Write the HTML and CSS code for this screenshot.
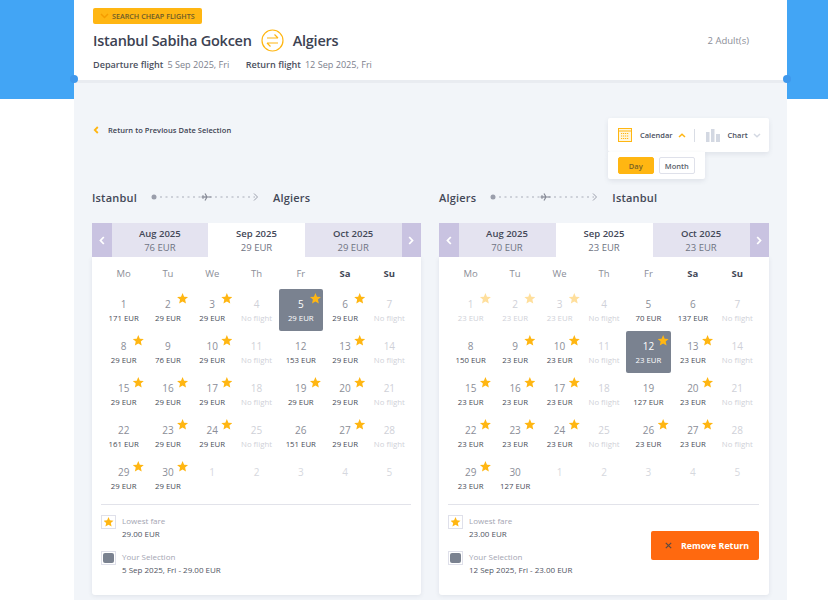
FILE: index.html
```html
<!DOCTYPE html>
<html lang="en">
<head>
    <meta charset="UTF-8">
    <title>Flight calendar</title>
    <link rel="stylesheet" href="styles.css">
</head>
<body>
    <div class="page">
        <div class="header">
            <div class="badge"><svg class="badge-chev" width="9" height="6" viewBox="0 0 9 6"><path d="M1 1l3.500 3.500L8 1" fill="none" stroke="#f59c00" stroke-width="1.500"/></svg>SEARCH CHEAP FLIGHTS</div>
            <div class="title-row">
                <div class="title-main">
                    <span>Istanbul Sabiha Gokcen</span>
                    <svg class="swap" width="23" height="23" viewBox="0 0 23 23"><circle cx="11.500" cy="11.500" r="10.500" fill="none" stroke="#ffb612" stroke-width="1.200"/><path d="M6 9h11M13.500 5.500L17 9M17 14H6M9.500 17.500L6 14" fill="none" stroke="#ffb612" stroke-width="1.200"/></svg>
                    <span>Algiers</span>
                </div>
                <div class="pax">2 Adult(s)</div>
            </div>
            <div class="dates">
                <b>Departure flight</b><span>5 Sep 2025, Fri</span>
                <b class="return">Return flight</b><span>12 Sep 2025, Fri</span>
            </div>
        </div>

        <div class="panel">
            <div class="toolbar">
                <a class="back"><svg width="6" height="8" viewBox="0 0 6 8"><path d="M4.800 1L1.800 4l3 3" fill="none" stroke="#ffb612" stroke-width="1.800"/></svg>Return to Previous Date Selection</a>
                <div class="switch">
                    <div class="switch-top">
                        <svg width="14" height="14" viewBox="0 0 14 14"><rect x=".5" y=".5" width="13" height="13" fill="#fff6dc" stroke="#ffb612"/><path d="M0 3h14" stroke="#ffb612"/><path d="M3 5.500h8M3 8h8M3 10.500h8" stroke="#ffb612" stroke-width="1.200" stroke-dasharray="1.200 .8"/></svg>
                        <span class="sw-label">Calendar</span>
                        <svg class="sw-chev" width="8" height="5" viewBox="0 0 8 5"><path d="M1 4l3-2.800L7 4" fill="none" stroke="#ffb612" stroke-width="1.500"/></svg>
                        <i class="sw-sep"></i>
                        <svg width="14" height="13" viewBox="0 0 14 13"><path d="M0 3h3.500v10H0zM5 0h3.500v13H5zM10 5h4v8h-4z" fill="#d3d8e2"/></svg>
                        <span class="sw-label">Chart</span>
                        <svg class="sw-chev" width="8" height="5" viewBox="0 0 8 5"><path d="M1 1l3 2.800L7 1" fill="none" stroke="#d3d8e2" stroke-width="1.500"/></svg>
                    </div>
                    <div class="switch-sub">
                        <span class="sub-btn on">Day</span>
                        <span class="sub-btn">Month</span>
                    </div>
                </div>
            </div>

            <div class="columns">
                <div class="col">
                    <div class="route">
                        <span>Istanbul</span>
                        <svg width="108" height="10" viewBox="0 0 108 10"><circle cx="3" cy="5" r="2.500" fill="#9a9eab"/><path d="M9 5h95" stroke="#a9adb9" stroke-dasharray="2 3.500"/><path d="M50.500 5h10M54 1.500L56 5l-2 3.500M52 3.300v3.400" fill="none" stroke="#858995" stroke-width="1.200"/><path d="M103 1.500L106.500 5 103 8.500" fill="none" stroke="#9a9eab"/></svg>
                        <span>Algiers</span>
                    </div>
                    <div class="tabs">
                        <div class="nav nav-l"><svg width="6" height="9" viewBox="0 0 6 9"><path d="M4.800 1L1.500 4.500l3.300 3.500" fill="none" stroke="#fff" stroke-width="1.800"/></svg></div>
                        <div class="tab"><b>Aug 2025</b><span>76 EUR</span></div>
                        <div class="tab active"><b>Sep 2025</b><span>29 EUR</span></div>
                        <div class="tab"><b>Oct 2025</b><span>29 EUR</span></div>
                        <div class="nav nav-r"><svg width="6" height="9" viewBox="0 0 6 9"><path d="M1.200 1l3.300 3.500L1.200 8" fill="none" stroke="#fff" stroke-width="1.800"/></svg></div>
                    </div>
                    <div class="card">
                        <div class="week"><span>Mo</span><span>Tu</span><span>We</span><span>Th</span><span>Fr</span><span class="wk">Sa</span><span class="wk">Su</span></div>
                        <div class="grid">
                            <div class="day"><em>1</em><small>171 EUR</small></div>
                            <div class="day low"><em>2</em><small>29 EUR</small></div>
                            <div class="day low"><em>3</em><small>29 EUR</small></div>
                            <div class="day none"><em>4</em><small>No flight</small></div>
                            <div class="day low sel"><em>5</em><small>29 EUR</small></div>
                            <div class="day low"><em>6</em><small>29 EUR</small></div>
                            <div class="day none"><em>7</em><small>No flight</small></div>

                            <div class="day low"><em>8</em><small>29 EUR</small></div>
                            <div class="day"><em>9</em><small>76 EUR</small></div>
                            <div class="day low"><em>10</em><small>29 EUR</small></div>
                            <div class="day none"><em>11</em><small>No flight</small></div>
                            <div class="day"><em>12</em><small>153 EUR</small></div>
                            <div class="day low"><em>13</em><small>29 EUR</small></div>
                            <div class="day none"><em>14</em><small>No flight</small></div>

                            <div class="day low"><em>15</em><small>29 EUR</small></div>
                            <div class="day low"><em>16</em><small>29 EUR</small></div>
                            <div class="day low"><em>17</em><small>29 EUR</small></div>
                            <div class="day none"><em>18</em><small>No flight</small></div>
                            <div class="day low"><em>19</em><small>29 EUR</small></div>
                            <div class="day low"><em>20</em><small>29 EUR</small></div>
                            <div class="day none"><em>21</em><small>No flight</small></div>

                            <div class="day"><em>22</em><small>161 EUR</small></div>
                            <div class="day low"><em>23</em><small>29 EUR</small></div>
                            <div class="day low"><em>24</em><small>29 EUR</small></div>
                            <div class="day none"><em>25</em><small>No flight</small></div>
                            <div class="day"><em>26</em><small>151 EUR</small></div>
                            <div class="day low"><em>27</em><small>29 EUR</small></div>
                            <div class="day none"><em>28</em><small>No flight</small></div>

                            <div class="day low"><em>29</em><small>29 EUR</small></div>
                            <div class="day low"><em>30</em><small>29 EUR</small></div>
                            <div class="day next"><em>1</em></div>
                            <div class="day next"><em>2</em></div>
                            <div class="day next"><em>3</em></div>
                            <div class="day next"><em>4</em></div>
                            <div class="day next"><em>5</em></div>
                        </div>
                        <div class="legend">
                            <div class="legend-list">
                                <div class="legend-item">
                                    <div class="legend-box"><i class="star"></i></div>
                                    <div class="legend-text"><p class="legend-label">Lowest fare</p><p class="legend-value">29.00 EUR</p></div>
                                </div>
                                <div class="legend-item">
                                    <div class="legend-box"><i class="swatch"></i></div>
                                    <div class="legend-text"><p class="legend-label">Your Selection</p><p class="legend-value">5 Sep 2025, Fri - 29.00 EUR</p></div>
                                </div>
                            </div>
                        </div>
                    </div>
                </div>

                <div class="col">
                    <div class="route">
                        <span>Algiers</span>
                        <svg width="108" height="10" viewBox="0 0 108 10"><circle cx="3" cy="5" r="2.500" fill="#9a9eab"/><path d="M9 5h95" stroke="#a9adb9" stroke-dasharray="2 3.500"/><path d="M50.500 5h10M54 1.500L56 5l-2 3.500M52 3.300v3.400" fill="none" stroke="#858995" stroke-width="1.200"/><path d="M103 1.500L106.500 5 103 8.500" fill="none" stroke="#9a9eab"/></svg>
                        <span>Istanbul</span>
                    </div>
                    <div class="tabs">
                        <div class="nav nav-l"><svg width="6" height="9" viewBox="0 0 6 9"><path d="M4.800 1L1.500 4.500l3.300 3.500" fill="none" stroke="#fff" stroke-width="1.800"/></svg></div>
                        <div class="tab"><b>Aug 2025</b><span>70 EUR</span></div>
                        <div class="tab active"><b>Sep 2025</b><span>23 EUR</span></div>
                        <div class="tab"><b>Oct 2025</b><span>23 EUR</span></div>
                        <div class="nav nav-r"><svg width="6" height="9" viewBox="0 0 6 9"><path d="M1.200 1l3.300 3.500L1.200 8" fill="none" stroke="#fff" stroke-width="1.800"/></svg></div>
                    </div>
                    <div class="card">
                        <div class="week"><span>Mo</span><span>Tu</span><span>We</span><span>Th</span><span>Fr</span><span class="wk">Sa</span><span class="wk">Su</span></div>
                        <div class="grid">
                            <div class="day low past"><em>1</em><small>23 EUR</small></div>
                            <div class="day low past"><em>2</em><small>23 EUR</small></div>
                            <div class="day low past"><em>3</em><small>23 EUR</small></div>
                            <div class="day none"><em>4</em><small>No flight</small></div>
                            <div class="day"><em>5</em><small>70 EUR</small></div>
                            <div class="day"><em>6</em><small>137 EUR</small></div>
                            <div class="day none"><em>7</em><small>No flight</small></div>

                            <div class="day"><em>8</em><small>150 EUR</small></div>
                            <div class="day low"><em>9</em><small>23 EUR</small></div>
                            <div class="day low"><em>10</em><small>23 EUR</small></div>
                            <div class="day none"><em>11</em><small>No flight</small></div>
                            <div class="day low sel"><em>12</em><small>23 EUR</small></div>
                            <div class="day low"><em>13</em><small>23 EUR</small></div>
                            <div class="day none"><em>14</em><small>No flight</small></div>

                            <div class="day low"><em>15</em><small>23 EUR</small></div>
                            <div class="day low"><em>16</em><small>23 EUR</small></div>
                            <div class="day low"><em>17</em><small>23 EUR</small></div>
                            <div class="day none"><em>18</em><small>No flight</small></div>
                            <div class="day"><em>19</em><small>127 EUR</small></div>
                            <div class="day low"><em>20</em><small>23 EUR</small></div>
                            <div class="day none"><em>21</em><small>No flight</small></div>

                            <div class="day low"><em>22</em><small>23 EUR</small></div>
                            <div class="day low"><em>23</em><small>23 EUR</small></div>
                            <div class="day low"><em>24</em><small>23 EUR</small></div>
                            <div class="day none"><em>25</em><small>No flight</small></div>
                            <div class="day low"><em>26</em><small>23 EUR</small></div>
                            <div class="day low"><em>27</em><small>23 EUR</small></div>
                            <div class="day none"><em>28</em><small>No flight</small></div>

                            <div class="day low"><em>29</em><small>23 EUR</small></div>
                            <div class="day"><em>30</em><small>127 EUR</small></div>
                            <div class="day next"><em>1</em></div>
                            <div class="day next"><em>2</em></div>
                            <div class="day next"><em>3</em></div>
                            <div class="day next"><em>4</em></div>
                            <div class="day next"><em>5</em></div>
                        </div>
                        <div class="legend">
                            <div class="legend-list">
                                <div class="legend-item">
                                    <div class="legend-box"><i class="star"></i></div>
                                    <div class="legend-text"><p class="legend-label">Lowest fare</p><p class="legend-value">23.00 EUR</p></div>
                                </div>
                                <div class="legend-item">
                                    <div class="legend-box"><i class="swatch"></i></div>
                                    <div class="legend-text"><p class="legend-label">Your Selection</p><p class="legend-value">12 Sep 2025, Fri - 23.00 EUR</p></div>
                                </div>
                            </div>
                            <button class="remove"><svg width="7" height="7" viewBox="0 0 7 7"><path d="M.8.8l5.400 5.400M6.200.8L.8 6.200" stroke="#5a4a44" stroke-width="1.200"/></svg>Remove Return</button>
                        </div>
                    </div>
                </div>
            </div>
        </div>
    </div>
</body>
</html>
```

FILE: styles.css
```css
html, body { height: 600px; overflow: hidden; }
body { margin: 0; font-family: "Open Sans", "Liberation Sans", sans-serif; color: #3c4252; background: linear-gradient(#42a5f5 99px, #fff 99px); }
p { margin: 0; }
.page { width: 713px; height: 600px; margin-left: 74px; background: #f2f5f9; position: relative; }
.page::before, .page::after { content: ""; position: absolute; top: 75px; width: 8px; height: 8px; border-radius: 50%; background: #3f98ec; z-index: 2; }
.page::before { left: -4px; }
.page::after { right: -4px; }

.header { height: 80px; box-sizing: border-box; padding: 8px 38px 0 19px; background: #fff; box-shadow: 0 3px 0 #e9ecf1; position: relative; z-index: 1; }
.badge { display: flex; align-items: center; width: 109px; height: 16px; box-sizing: border-box; padding-left: 7px; background: #ffb612; border-radius: 2px; font-size: 7.200px; font-weight: 600; color: #6b5a2a; white-space: nowrap; }
.badge-chev { margin-right: 3px; }
.title-row { display: flex; justify-content: space-between; align-items: center; height: 23px; margin-top: 5px; }
.title-main { display: flex; align-items: center; gap: 9px; font-size: 14.500px; font-weight: 600; color: #3c4252; letter-spacing: -.25px; }
.pax { font-size: 9.500px; color: #8b8e98; }
.dates { margin-top: 6px; font-size: 9.100px; color: #7d818d; line-height: 13px; white-space: nowrap; }
.dates b { font-weight: 600; color: #4b5060; margin-right: 4px; }
.dates .return { margin-left: 14px; }

.panel { padding: 38px 18px 0; }
.toolbar { display: flex; justify-content: space-between; align-items: flex-start; height: 67px; }
.back { display: flex; align-items: center; gap: 9px; margin-top: 7px; font-size: 7.500px; font-weight: 600; color: #3c4252; letter-spacing: .05px; white-space: nowrap; }
.back svg { margin-left: 1px; }
.switch { width: 161px; position: relative; }
.switch-top { display: flex; align-items: center; height: 34px; box-sizing: border-box; padding-left: 10px; background: #fff; border-radius: 2px; box-shadow: 0 2px 5px rgba(60,70,100,.1); }
.sw-label { margin-left: 8px; font-size: 7.500px; font-weight: 600; color: #4b5060; }
.sw-chev { margin-left: 5px; }
.sw-sep { width: 1px; height: 13px; margin: 0 11px 0 8px; background: #d9dde5; }
.switch-sub { display: flex; gap: 5px; width: 97px; height: 27px; box-sizing: border-box; padding: 5px 10px 0; background: #fff; border-radius: 0 0 2px 2px; box-shadow: 0 2px 5px rgba(60,70,100,.1); position: relative; }
.sub-btn { display: flex; align-items: center; justify-content: center; width: 37px; height: 17px; box-sizing: border-box; border: 1px solid #dfe1ea; border-radius: 2px; font-size: 7.500px; font-weight: 600; color: #5a5f6c; }
.sub-btn.on { width: 36px; background: #ffb612; border-color: #ffb612; color: #7a6224; }

.columns { display: grid; grid-template-columns: 329px 330px; gap: 18px; }
.route { display: flex; align-items: center; gap: 14px; height: 16px; margin-top: 4px; font-size: 11px; font-weight: 600; letter-spacing: .2px; color: #434857; }
.tabs { display: flex; height: 34px; margin-top: 18px; }
.nav { width: 19.500px; display: flex; align-items: center; justify-content: center; background: #c9c3e1; }
.tab { flex: 1; display: flex; flex-direction: column; align-items: center; justify-content: center; padding-top: 1px; box-sizing: border-box; background: #e4e3f0; font-size: 9.500px; line-height: 14px; color: #6f7382; }
.tab b { font-weight: 600; color: #434857; }
.tab.active { background: #fff; }

.card { height: 338px; box-sizing: border-box; padding: 0 9.500px; background: #fff; border-radius: 0 0 3px 3px; box-shadow: 0 1px 4px rgba(60,70,100,.1); }
.week { display: grid; grid-template-columns: repeat(7, 1fr); height: 32px; align-items: center; text-align: center; font-size: 9.500px; color: #8b8e98; }
.week .wk { font-weight: 700; color: #434857; }
.grid { display: grid; grid-template-columns: repeat(7, 1fr); grid-auto-rows: 42px; }
.day { position: relative; display: flex; flex-direction: column; align-items: center; padding-top: 8px; box-sizing: border-box; text-align: center; border-radius: 2px; }
.day em { font-style: normal; font-size: 10px; line-height: 14px; color: #8b8e98; }
.day small { font-size: 7.800px; line-height: 14px; font-weight: 500; color: #484c57; white-space: nowrap; }
.day.none em, .day.none small { color: #cfd1d8; font-weight: 400; }
.day.next em { color: #d6d8de; }
.day.low::after { content: ""; position: absolute; top: 4px; right: 2px; width: 11px; height: 11px; background: #ffb612; clip-path: polygon(50% 0, 64% 33%, 100% 37%, 73% 60%, 81% 96%, 50% 77%, 19% 96%, 27% 60%, 0 37%, 36% 33%); }
.day.past em, .day.past small { color: #cfd1d8; font-weight: 400; }
.day.past::after { background: #ffdf9c; }
.day.sel { background: #7a8290; }
.day.sel em, .day.sel small { color: #fff; }

.legend { display: flex; justify-content: space-between; align-items: flex-start; margin: 5px .5px 0 -.5px; padding-top: 10px; border-top: 1px solid #e2e3ea; }
.legend-list { display: flex; flex-direction: column; gap: 11px; }
.legend-item { display: flex; gap: 6px; }
.legend-box { display: flex; align-items: center; justify-content: center; width: 15px; height: 14px; box-sizing: border-box; border: 1px solid #dfe0ea; }
.legend-box .star { display: block; width: 10px; height: 10px; background: #ffb612; clip-path: polygon(50% 0, 64% 33%, 100% 37%, 73% 60%, 81% 96%, 50% 77%, 19% 96%, 27% 60%, 0 37%, 36% 33%); }
.legend-box .swatch { display: block; width: 11px; height: 10px; background: #7a8290; border-radius: 2px; }
.legend-text { margin-top: -1px; }
.legend-label { font-size: 8px; line-height: 13px; color: #a3a5b2; }
.legend-value { font-size: 8px; line-height: 13px; font-weight: 500; color: #50545f; }
.remove { display: flex; align-items: center; gap: 9px; flex: none; width: 108px; height: 29px; margin-top: 16px; padding: 0 0 0 14px; border: 0; border-radius: 2px; background: #ff690f; color: #fff; font-family: inherit; font-size: 8.800px; font-weight: 700; white-space: nowrap; }
```
